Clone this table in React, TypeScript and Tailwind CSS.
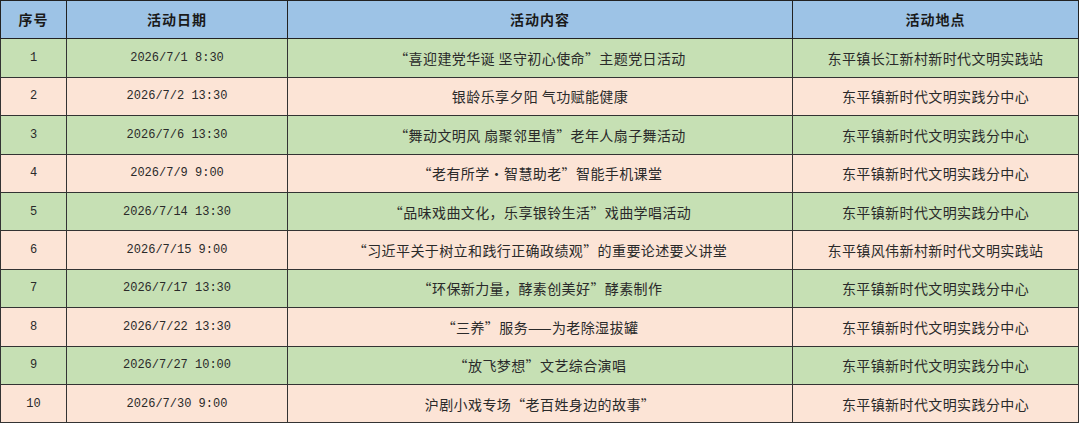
const rows = [
  { no: '1', date: '2026/7/1 8:30', content: '“喜迎建党华诞 坚守初心使命”主题党日活动', place: '东平镇长江新村新时代文明实践站' },
  { no: '2', date: '2026/7/2 13:30', content: '银龄乐享夕阳 气功赋能健康', place: '东平镇新时代文明实践分中心' },
  { no: '3', date: '2026/7/6 13:30', content: '“舞动文明风 扇聚邻里情”老年人扇子舞活动', place: '东平镇新时代文明实践分中心' },
  { no: '4', date: '2026/7/9 9:00', content: '“老有所学•智慧助老”智能手机课堂', place: '东平镇新时代文明实践分中心' },
  { no: '5', date: '2026/7/14 13:30', content: '“品味戏曲文化，乐享银铃生活”戏曲学唱活动', place: '东平镇新时代文明实践分中心' },
  { no: '6', date: '2026/7/15 9:00', content: '“习近平关于树立和践行正确政绩观”的重要论述要义讲堂', place: '东平镇风伟新村新时代文明实践站' },
  { no: '7', date: '2026/7/17 13:30', content: '“环保新力量，酵素创美好”酵素制作', place: '东平镇新时代文明实践分中心' },
  { no: '8', date: '2026/7/22 13:30', content: '“三养”服务——为老除湿拔罐', place: '东平镇新时代文明实践分中心' },
  { no: '9', date: '2026/7/27 10:00', content: '“放飞梦想”文艺综合演唱', place: '东平镇新时代文明实践分中心' },
  { no: '10', date: '2026/7/30 9:00', content: '沪剧小戏专场“老百姓身边的故事”', place: '东平镇新时代文明实践分中心' },
]

export default function App() {
  return (
    <div className="w-[1080px] h-[424px] bg-white">
      <table className="w-[1079px] table-fixed border-collapse border border-[#222] text-[#2a2a2a] [font-family:'Noto_Sans_CJK_SC',sans-serif]">
        <colgroup>
          <col className="w-[66px]" />
          <col className="w-[221px]" />
          <col className="w-[505px]" />
          <col />
        </colgroup>
        <thead>
          <tr className="h-[38.4px] bg-[#9dc3e6] text-[14px] text-[#1a1a1a]">
            <th className="border border-[#222] font-bold tracking-[1px]">序号</th>
            <th className="border border-[#222] font-bold tracking-[1px]">活动日期</th>
            <th className="border border-[#222] font-bold tracking-[1px]">活动内容</th>
            <th className="border border-[#222] font-bold tracking-[1px]">活动地点</th>
          </tr>
        </thead>
        <tbody>
          {rows.map((r, i) => (
            <tr
              key={r.no}
              className={`h-[38.4px] ${i % 2 === 0 ? 'bg-[#c6e0b4]' : 'bg-[#fce4d6]'}`}
            >
              <td className="border border-[#333] text-center text-[12px] [font-family:'Liberation_Mono',monospace]">
                {r.no}
              </td>
              <td className="border border-[#333] text-center text-[12px] [font-family:'Liberation_Mono',monospace]">
                {r.date}
              </td>
              <td className="border border-[#333] text-center text-[14px] leading-none tracking-[0.4px]">
                {r.content}
              </td>
              <td className="border border-[#333] text-center text-[14px] leading-none tracking-[0.4px]">
                {r.place}
              </td>
            </tr>
          ))}
        </tbody>
      </table>
    </div>
  )
}
